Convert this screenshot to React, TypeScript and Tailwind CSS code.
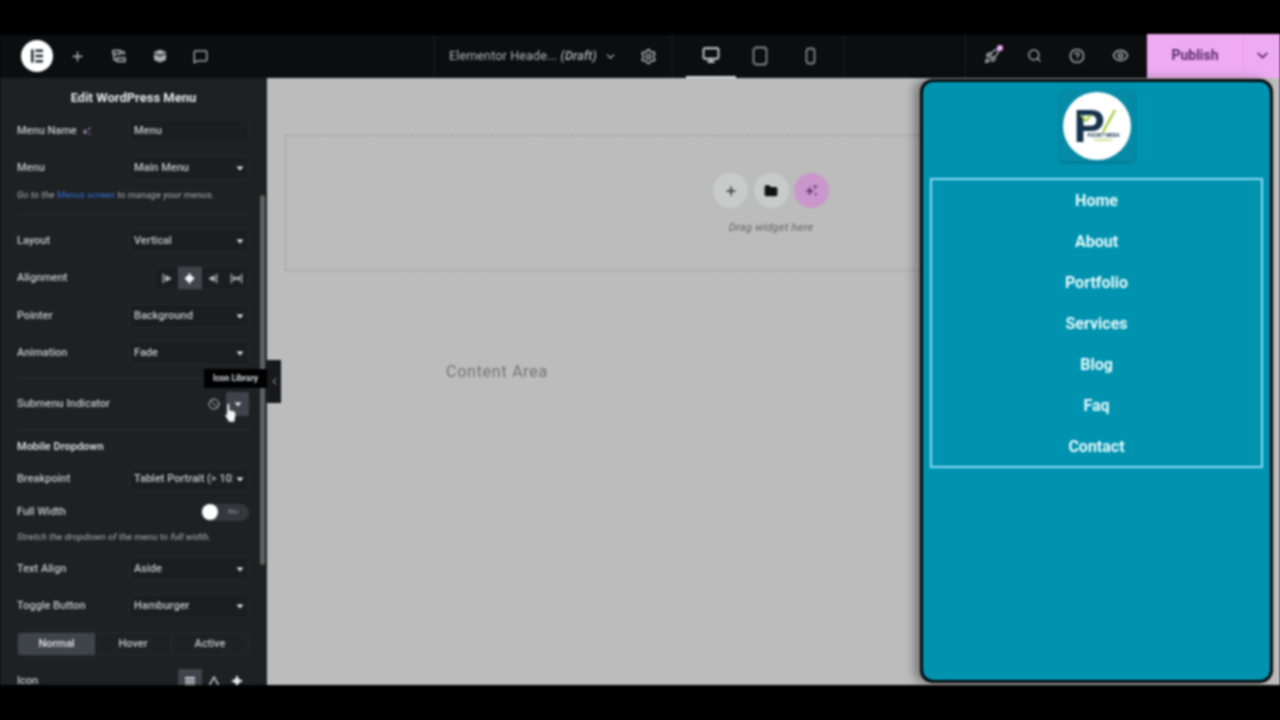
import { ChevronDown, ChevronLeft, Eye, Folder, Monitor, Plus, Search, Settings, CircleHelp, Rocket, MessageSquare, Ban } from 'lucide-react'
import type { ReactNode } from 'react'

const MENU_ITEMS = ['Home', 'About', 'Portfolio', 'Services', 'Blog', 'Faq', 'Contact']

function Caret() {
  return (
    <svg width="8" height="5" viewBox="0 0 8 5" className="shrink-0">
      <path d="M0.5 0.5h7L4 4.5z" fill="#e2e4e7" />
    </svg>
  )
}

function Sparks({ color, size = 14 }: { color: string; size?: number }) {
  return (
    <svg width={size} height={size} viewBox="0 0 16 16" fill={color}>
      <path d="M6 3.5l1.4 3.6L11 8.5 7.4 9.9 6 13.5 4.6 9.9 1 8.5l3.6-1.4z" />
      <path d="M12 1l.8 2.2L15 4l-2.2.8L12 7l-.8-2.2L9 4l2.2-.8z" />
      <path d="M12.5 10l.6 1.4 1.4.6-1.4.6-.6 1.4-.6-1.4-1.4-.6 1.4-.6z" />
    </svg>
  )
}

function Row({ label, children, className = '' }: { label: ReactNode; children: ReactNode; className?: string }) {
  return (
    <div className={`flex h-6 items-center justify-between ${className}`}>
      <span className="flex items-center gap-1 text-[#c4c6ca]">{label}</span>
      {children}
    </div>
  )
}

function Select({ value }: { value: string }) {
  return (
    <div className="flex h-6 w-[120px] items-center justify-between gap-[3px] rounded-[3px] border border-[#26282b] bg-[#1b1d1f] px-[4px] text-[#c4c6ca]">
      <span className="overflow-hidden whitespace-nowrap">{value}</span>
      <Caret />
    </div>
  )
}

function Divider({ className = '' }: { className?: string }) {
  return <div className={`h-px bg-[#2a2c2f] ${className}`} />
}

function Hint({ children, className = '' }: { children: ReactNode; className?: string }) {
  return <p className={`text-[9.5px] leading-[14px] italic text-[#8f9296] ${className}`}>{children}</p>
}

function AlignIcon({ kind }: { kind: number }) {
  const fills = [
    <path key="a" d="M6 4l6 3-6 3z" />,
    <path key="b" d="M7 2.5l5 4.5-5 4.5L2 7z" />,
    <path key="c" d="M8 4L2 7l6 3z" />,
    <path key="d" d="M4 4.5l3 2.5 3-2.5v5L7 7l-3 2.5z" />,
  ]
  const bars = ['M3.5 2v10', 'M7 1v12', 'M10.5 2v10', 'M1.5 2v10M12.5 2v10']
  const color = kind === 1 ? '#f2f3f4' : '#b4b7bb'
  return (
    <svg width="13" height="13" viewBox="0 0 14 14" fill={color} stroke={color} strokeWidth="1">
      <path d={bars[kind]} strokeWidth="1.4" />
      {fills[kind]}
    </svg>
  )
}

function Sidebar() {
  return (
    <aside className="relative flex w-[267px] shrink-0 flex-col overflow-hidden bg-[#1f2022] text-[11px] font-medium">
      <div className="flex h-[41px] shrink-0 items-center justify-center pb-[2px] text-[13px] font-bold text-[#e6e7e9]">Edit WordPress Menu</div>
      <div className="box-content flex w-[232px] flex-col pl-[17px]">
        <Row label={<>Menu Name <Sparks color="#9a86ad" size={11} /></>}>
          <div className="flex h-6 w-[120px] items-center rounded-[3px] border border-[#26282b] bg-[#1b1d1f] pl-[4px] text-[#c4c6ca]">Menu</div>
        </Row>
        <Row label="Menu" className="mt-[13px]"><Select value="Main Menu" /></Row>
        <Hint className="mt-[8px]">Go to the <span className="text-[#2f5fb3]">Menus screen</span> to manage your menus.</Hint>
        <Divider className="mt-[13px]" />
        <Row label="Layout" className="mt-[13px]"><Select value="Vertical" /></Row>
        <Row label="Alignment" className="mt-[13px]">
          <div className="flex h-6 w-[95px] overflow-hidden rounded-[3px] border border-[#26282b]">
            {[0, 1, 2, 3].map((k) => (
              <div key={k} className={`flex flex-1 items-center justify-center ${k === 1 ? 'bg-[#3f444b]' : 'bg-[#1b1d1f]'}`}>
                <AlignIcon kind={k} />
              </div>
            ))}
          </div>
        </Row>
        <Row label="Pointer" className="mt-[14px]"><Select value="Background" /></Row>
        <Row label="Animation" className="mt-[13px]"><Select value="Fade" /></Row>
        <Divider className="mt-[13px]" />
        <Row label="Submenu Indicator" className="mt-[13px]">
          <div className="flex items-center gap-[6px]">
            <Ban size={12} color="#bcbec2" />
            <div className="flex h-6 w-[23px] items-center justify-center rounded-[2px] bg-[#3f444b]"><Caret /></div>
          </div>
        </Row>
        <Divider className="mt-[13px]" />
        <div className="mt-[10px] h-[14px] text-[11px] leading-[14px] font-bold text-[#d0d2d5]">Mobile Dropdown</div>
        <Row label="Breakpoint" className="mt-[13px]"><Select value="Tablet Portrait (> 1024px)" /></Row>
        <div className="mt-[12px] flex h-[18px] items-center justify-between">
          <span className="text-[#c4c6ca]">Full Width</span>
          <div className="flex h-[17px] w-12 items-center rounded-full bg-[#34373c] pl-[1px]">
            <span className="h-4 w-4 rounded-full bg-white" />
            <span className="ml-[10px] text-[8px] text-[#7f8287]">No</span>
          </div>
        </div>
        <Hint className="mt-[9px]">Stretch the dropdown of the menu to full width.</Hint>
        <Row label="Text Align" className="mt-[13px]"><Select value="Aside" /></Row>
        <Row label="Toggle Button" className="mt-[13px]"><Select value="Hamburger" /></Row>
        <div className="mt-[14px] flex h-6 w-[232px] overflow-hidden rounded-[3px] border border-[#26282b] text-[#c4c6ca]">
          <div className="flex w-[77px] items-center justify-center bg-[#3f444b] text-[#e2e3e5]">Normal</div>
          <div className="flex flex-1 items-center justify-center border-r border-[#26282b]">Hover</div>
          <div className="flex flex-1 items-center justify-center">Active</div>
        </div>
        <Row label="Icon" className="mt-[13px]">
          <div className="flex h-6 w-[71px] overflow-hidden rounded-[3px]">
            <div className="flex flex-1 items-center justify-center bg-[#3f444b]">
              <svg width="12" height="9" viewBox="0 0 12 9" fill="#d5d8dc"><path d="M1 0h10v2H1zM1 3.5h10v2H1zM1 7h10v2H1z" /></svg>
            </div>
            <div className="flex flex-1 items-center justify-center">
              <svg width="12" height="11" viewBox="0 0 12 11" fill="none" stroke="#d5d8dc" strokeWidth="1.4"><path d="M6 1l5 9H1z" /></svg>
            </div>
            <div className="flex flex-1 items-center justify-center">
              <svg width="12" height="12" viewBox="0 0 12 12" fill="#e5e6e8"><path d="M6 0l2 4 4 2-4 2-2 4-2-4-4-2 4-2z" /></svg>
            </div>
          </div>
        </Row>
      </div>
      {/* scrollbar */}
      <div className="absolute top-[117px] left-[260px] h-[370px] w-[5px] rounded-full bg-[#5d6064]" />
      {/* icon library tooltip */}
      <div className="absolute top-[291px] left-[204px] flex h-[19px] w-[63px] items-center justify-center bg-black text-[8.5px] font-bold text-[#d5d8dc]">Icon Library</div>
    </aside>
  )
}

function TopBar() {
  return (
    <header className="flex h-[43px] shrink-0 items-center bg-[#0c0d0e] pb-[1px] text-[#b9bbbe]">
      <div className="flex w-[434px] items-center pl-[21px]">
        <div className="flex h-8 w-8 items-center justify-center rounded-full bg-white">
          <svg width="16" height="16" viewBox="0 0 16 16" fill="#26292c">
            <path d="M2 1.5h2.6v13H2zM6.4 1.5H14v2.6H6.4zM6.4 6.7H14v2.6H6.4zM6.4 11.9H14v2.6H6.4z" />
          </svg>
        </div>
        <Plus size={15} strokeWidth={2.2} className="ml-[17px]" />
        <svg width="16" height="16" viewBox="0 0 16 16" fill="none" stroke="currentColor" strokeWidth="1.4" className="ml-[26px]">
          <path d="M2 2.5h7.5v3.5H2zM6 10h8v3.5H6zM9.5 4H13v3M6 11.7H3V6" />
        </svg>
        <svg width="16" height="16" viewBox="0 0 16 16" className="ml-[25px]">
          <path d="M8 1.5l6 2.5v8l-6 2.5L2 12V4z" fill="#a9abae" />
          <path d="M2.5 5.5L8 7.8l5.5-2.3" fill="none" stroke="#0c0d0e" strokeWidth="1.1" />
        </svg>
        <MessageSquare size={15} className="ml-[25px]" />
      </div>
      <div className="flex h-full w-[238px] items-center border-l border-[#1d1e20] pl-[14px]">
        <span className="text-[12.5px] tracking-[0.15px] text-[#b4b6b9]">Elementor Heade... <i className="font-medium">(Draft)</i></span>
        <ChevronDown size={13} className="ml-[7px]" />
        <Settings size={17} className="ml-[23px]" />
      </div>
      <div className="flex h-full w-[173px] items-center border-x border-[#1d1e20] pl-[13px]">
        <div className="flex h-[44px] w-[50px] items-center justify-center border-b-2 border-[#d8d8d8] pb-[1px]"><Monitor size={18} className="text-[#d0d2d4]" strokeWidth={2.4} /></div>
        <svg width="16" height="20" viewBox="0 0 16 20" fill="none" stroke="#85878a" strokeWidth="1.8" className="ml-[16px]"><rect x="1.5" y="1.5" width="13" height="17" rx="3" /></svg>
        <svg width="11" height="18" viewBox="0 0 11 18" fill="none" stroke="#85878a" strokeWidth="1.8" className="ml-[37px]"><rect x="1.5" y="1.5" width="8" height="15" rx="2.5" /></svg>
      </div>
      <div className="flex h-[44px] flex-1 items-center justify-end">
        <div className="flex h-full w-[182px] items-center border-l border-[#1d1e20] pl-[18px] pb-[1px]">
          <span className="relative">
            <Rocket size={16} />
            <span className="absolute -top-[3px] right-[-3px] h-[6px] w-[6px] rounded-full bg-[#f0abfc]" />
          </span>
          <Search size={15} className="ml-[27px]" />
          <CircleHelp size={16} className="ml-[27px]" />
          <Eye size={17} className="ml-[27px]" />
        </div>
        <div className="flex h-full w-[133px] items-center bg-[#efabf1] pb-[2px] text-[#5a2b70]">
          <span className="flex h-full w-24 items-center justify-center text-sm font-bold">Publish</span>
          <span className="flex h-full flex-1 items-center justify-center border-l border-[#e6a1e8]"><ChevronDown size={17} strokeWidth={2.4} /></span>
        </div>
      </div>
    </header>
  )
}

function Logo() {
  return (
    <div className="flex h-[71px] w-[74px] items-center justify-center bg-[#068aa6] shadow-[0_2px_4px_rgba(0,60,80,0.35)]">
      <div className="relative h-[68px] w-[68px] rounded-full bg-white">
        <span className="absolute top-[17px] left-[11px] w-[11px] text-[47px] leading-[34px] font-bold text-[#14304a] font-['Liberation_Sans']">P</span>
        <span className="absolute top-[41px] left-[25px] whitespace-nowrap text-[4.5px] leading-[5px] font-bold text-[#14304a]">POCKET MEDIA</span>
        <span className="absolute top-[47px] left-[31px] h-[2px] w-[18px] bg-[#cfe49a]" />
        <svg width="16" height="24" viewBox="0 0 16 24" className="absolute top-[17px] left-[38px]">
          <path d="M14 1L2 23" stroke="#a6cf3c" strokeWidth="2.4" fill="none" />
        </svg>
        <svg width="12" height="8" viewBox="0 0 12 8" className="absolute top-[22px] left-[17px]">
          <path d="M1 1l5 6 5-6" stroke="#a6cf3c" strokeWidth="2" fill="none" />
        </svg>
      </div>
    </div>
  )
}

function MobileFrame() {
  return (
    <div className="mt-[1px] mb-[2px] ml-auto mr-[7px] flex w-[353px] shrink-0 flex-col items-center rounded-[13px] border-[3px] border-[#05090b] bg-[#0093b0] pt-2 shadow-[-6px_0_10px_rgba(0,0,0,0.35)]">
      <Logo />
      <nav className="mt-[17px] flex h-[290px] w-[333px] flex-col items-center overflow-hidden border-2 border-[#8fdaf4]">
        {MENU_ITEMS.map((item) => (
          <a key={item} className="flex h-[41px] shrink-0 items-center text-base font-bold text-[#e6fafc]">{item}</a>
        ))}
      </nav>
    </div>
  )
}

function Canvas() {
  return (
    <main className="relative flex min-w-0 flex-1 bg-[#bcbcbc]">
      <div className="flex min-w-0 flex-1 flex-col pt-[57px] pl-[18px]">
        <div className="flex h-[136px] flex-col items-center border border-r-0 border-dashed border-[#999999] pt-[37px] pl-[336px]">
          <div className="flex items-center gap-[5.5px]">
            <span className="flex h-[35px] w-[35px] items-center justify-center rounded-full bg-[#c9cbcb] text-[#333]"><Plus size={14} strokeWidth={2.6} /></span>
            <span className="flex h-[35px] w-[35px] items-center justify-center rounded-full bg-[#c9cbcb]"><Folder size={14} fill="#111" stroke="#111" /></span>
            <span className="flex h-[35px] w-[35px] items-center justify-center rounded-full bg-[#ca97cd]"><Sparks color="#6c3d7c" size={15} /></span>
          </div>
          <span className="mt-[11px] text-[11.5px] font-medium italic text-[#797979]">Drag widget here</span>
        </div>
        <div className="mt-[89px] pl-[161px] text-base tracking-[0.75px] text-[#747474]">Content Area</div>
      </div>
      <MobileFrame />
      {/* panel collapse handle */}
      <div className="absolute top-[282px] left-0 flex h-[43px] w-[14px] items-center justify-center bg-[#17181a] text-[#c9ccd0]"><ChevronLeft size={11} /></div>
    </main>
  )
}

export default function App() {
  return (
    <div className="h-[720px] w-[1280px] overflow-hidden bg-black">
      <div className="relative flex h-[720px] w-[1280px] flex-col overflow-hidden bg-black font-['Roboto',sans-serif] blur-[1px]">
        <div className="h-[35px] shrink-0 bg-black" />
        <TopBar />
        <div className="flex h-[607px] shrink-0">
          <Sidebar />
          <Canvas />
        </div>
        {/* pointer */}
        <div className="pointer-events-none absolute top-[403px] left-[224px]">
          <svg width="14" height="20" viewBox="0 0 14 20" fill="#f6f6f6" stroke="#333" strokeWidth="0.5">
            <path d="M3 2c0-1.6 2.6-1.6 2.6 0v5.5l1.2-.2 1.2.3 1.2.3 1.3.6.9.9c.6 1.5.4 3.4-.2 5L10.500 19H5L1.300 13c-.8-1.300.8-2.500 1.700-1.500z" />
          </svg>
        </div>
      </div>
    </div>
  )
}
